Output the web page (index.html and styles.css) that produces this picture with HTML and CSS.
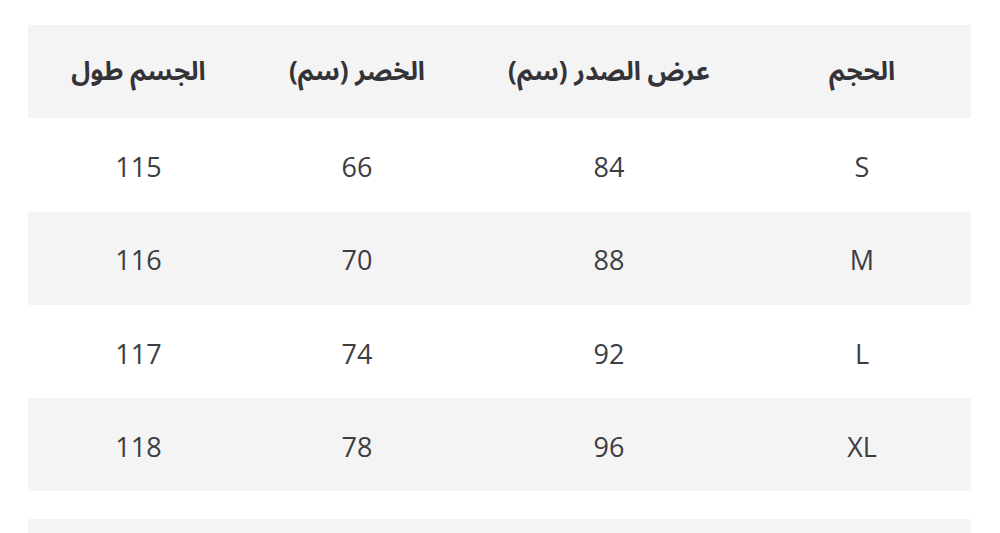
FILE: index.html
```html
<!DOCTYPE html>
<html lang="ar" dir="rtl">
<head>
<meta charset="utf-8">
<link rel="stylesheet" href="styles.css">
</head>
<body>
<div class="page">
  <div class="table">
    <div class="row head">
      <div class="cell">الحجم</div>
      <div class="cell">عرض الصدر (سم)</div>
      <div class="cell">الخصر (سم)</div>
      <div class="cell">الجسم طول</div>
    </div>
    <div class="row">
      <div class="cell">S</div>
      <div class="cell">84</div>
      <div class="cell">66</div>
      <div class="cell">115</div>
    </div>
    <div class="row alt">
      <div class="cell">M</div>
      <div class="cell">88</div>
      <div class="cell">70</div>
      <div class="cell">116</div>
    </div>
    <div class="row">
      <div class="cell">L</div>
      <div class="cell">92</div>
      <div class="cell">74</div>
      <div class="cell">117</div>
    </div>
    <div class="row alt">
      <div class="cell">XL</div>
      <div class="cell">96</div>
      <div class="cell">78</div>
      <div class="cell">118</div>
    </div>
  </div>
  <div class="next"></div>
</div>
</body>
</html>
```
FILE: styles.css
```css
html, body {
  margin: 0;
  padding: 0;
  background: #ffffff;
}
body {
  font-family: "Open Sans", "Noto Sans", "DejaVu Sans", sans-serif;
  color: #3d3d42;
  overflow: hidden;
  height: 533px;
}
.page {
  padding: 25px 29px 0 28px;
}
.table {
  display: flex;
  flex-direction: column;
}
.row {
  display: grid;
  grid-template-columns: 218px 288px 216px 221px;
  height: 93.3px;
  align-items: center;
}
.row.head,
.row.alt {
  background: #f4f4f4;
}
.cell {
  text-align: center;
  font-size: 27px;
  line-height: 1;
  padding-top: 3px;
}
.head .cell {
  font-family: "Noto Sans Arabic", "DejaVu Sans", sans-serif;
  font-weight: 700;
  font-size: 26px;
  color: #333338;
  padding-top: 0;
}
.next {
  margin-top: 28px;
  height: 40px;
  background: #f4f4f4;
}
```
